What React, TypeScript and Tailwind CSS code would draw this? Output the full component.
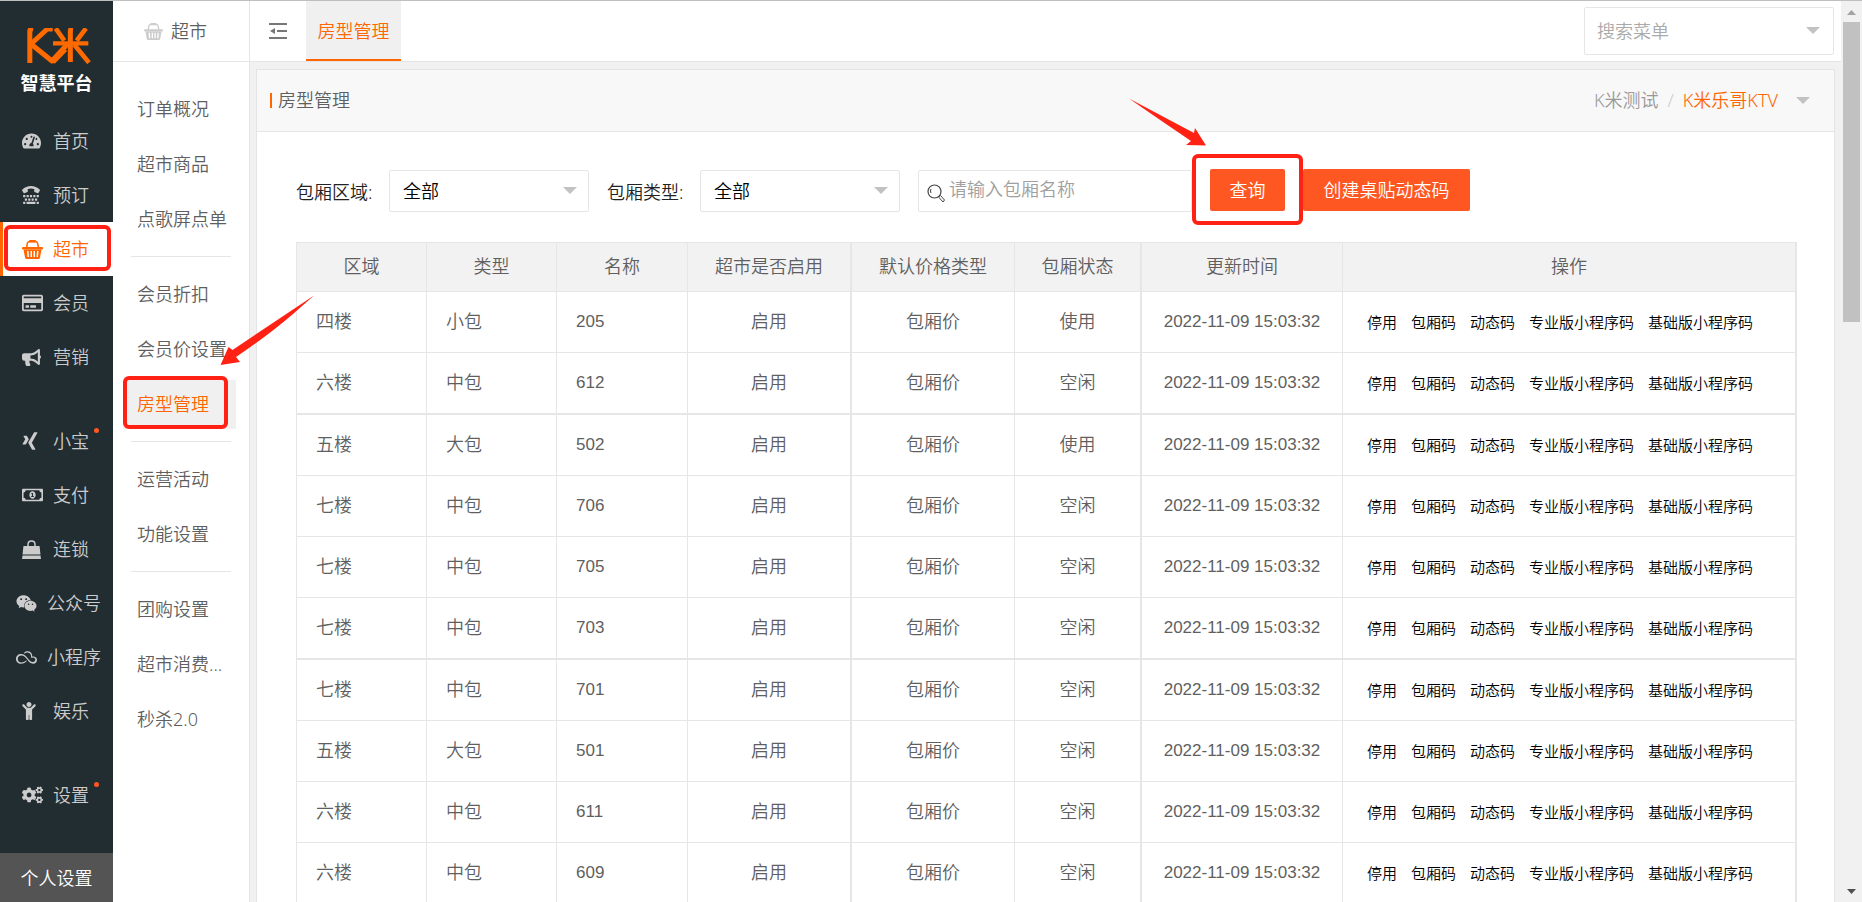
import type { ReactNode } from "react";
import {
  FaBullhorn,
  FaChild,
  FaCogs,
  FaRegCreditCard,
  FaRegMoneyBillAlt,
  FaSkyatlas,
  FaTachometerAlt,
  FaTty,
  FaWeixin,
  FaXing,
} from "react-icons/fa";

type NavItem = {
  label: string;
  icon: ReactNode;
  active?: boolean;
  dot?: boolean;
  wide?: boolean;
};

const navGroups: NavItem[][] = [
  [
    { label: "首页", icon: <FaTachometerAlt className="h-[18px] w-[19px]" /> },
    { label: "预订", icon: <FaTty className="size-[18px]" /> },
    { label: "超市", icon: <BasketIcon className="h-[19px] w-[21px]" />, active: true },
    { label: "会员", icon: <FaRegCreditCard className="h-5 w-[21px]" /> },
    { label: "营销", icon: <FaBullhorn className="size-[19px]" /> },
  ],
  [
    { label: "小宝", icon: <FaXing className="h-5 w-[16px]" />, dot: true },
    { label: "支付", icon: <FaRegMoneyBillAlt className="h-[18px] w-[21px]" /> },
    { label: "连锁", icon: <BagIcon /> },
    { label: "公众号", icon: <FaWeixin className="size-[21px]" />, wide: true },
    { label: "小程序", icon: <FaSkyatlas className="size-[21px]" />, wide: true },
    { label: "娱乐", icon: <FaChild className="h-[18px] w-[14px]" /> },
  ],
  [{ label: "设置", icon: <FaCogs className="h-5 w-[21px]" />, dot: true }],
];

const menuGroups = [
  ["订单概况", "超市商品", "点歌屏点单"],
  ["会员折扣", "会员价设置", "房型管理"],
  ["运营活动", "功能设置"],
  ["团购设置", "超市消费...", "秒杀2.0"],
];

const columns = [
  { title: "区域", width: "w-[130px]" },
  { title: "类型", width: "w-[130px]" },
  { title: "名称", width: "w-[131px]" },
  { title: "超市是否启用", width: "w-[164px]" },
  { title: "默认价格类型", width: "w-[163px]" },
  { title: "包厢状态", width: "w-[127px]" },
  { title: "更新时间", width: "w-[201px]" },
  { title: "操作", width: "" },
];

const rooms = [
  { area: "四楼", type: "小包", name: "205", status: "使用" },
  { area: "六楼", type: "中包", name: "612", status: "空闲" },
  { area: "五楼", type: "大包", name: "502", status: "使用" },
  { area: "七楼", type: "中包", name: "706", status: "空闲" },
  { area: "七楼", type: "中包", name: "705", status: "空闲" },
  { area: "七楼", type: "中包", name: "703", status: "空闲" },
  { area: "七楼", type: "中包", name: "701", status: "空闲" },
  { area: "五楼", type: "大包", name: "501", status: "空闲" },
  { area: "六楼", type: "中包", name: "611", status: "空闲" },
  { area: "六楼", type: "中包", name: "609", status: "空闲" },
];

const actions = ["停用", "包厢码", "动态码", "专业版小程序码", "基础版小程序码"];

function BasketIcon({ className }: { className: string }) {
  return (
    <svg viewBox="0 0 42 38" className={className} fill="currentColor">
      <path d="M9 15 11 6q1-3 4-3h12q3 0 4 3l2 9" fill="none" stroke="currentColor" strokeWidth="3" />
      <rect x="14" y="0" width="14" height="5" rx="2" />
      <rect x="0" y="14" width="42" height="5" rx="2" />
      <path
        fillRule="evenodd"
        d="M3 19h36l-3 16q-.5 3-3 3H9q-2.500 0-3-3zM10 22l1 12h3l-1-12zM17 22v12h3V22zM23 22v12h3V22zM30 22l-1 12h3l1-12z"
      />
    </svg>
  );
}

function BagIcon() {
  return (
    <svg viewBox="0 0 38 38" className="size-[19px]" fill="currentColor">
      <path d="M12 16V9q0-7 7-7t7 7v7" fill="none" stroke="currentColor" strokeWidth="3" />
      <path d="M3 12h32l2 17H1z" />
      <path d="M1 31h36l1 7H0z" />
    </svg>
  );
}

function Logo() {
  return (
    <svg viewBox="80 56 192 108" className="ml-[5px] h-9 w-16" fill="none" stroke="#ff6a00" strokeWidth="15">
      <path d="M88.500 161V66q0-8 10-8" />
      <path d="M157 59H141L92 104l63 51 45-49M195 120 158 158" strokeLinejoin="round" />
      <path d="M158 102H264" strokeWidth="13" />
      <path d="M210 158V66q0-8 8-8" />
      <path d="M166 57l26 37M257 57l-28 37M222 106l44 54" strokeWidth="14" />
    </svg>
  );
}

function Caret({ className = "" }: { className?: string }) {
  return (
    <svg viewBox="0 0 14 7" className={`h-[7px] w-[14px] fill-[#c2c2c2] ${className}`}>
      <path d="M0 0h14L7 7z" />
    </svg>
  );
}

function SearchIcon() {
  return (
    <svg viewBox="0 0 18 19" className="h-[19px] w-[18px]" fill="none" stroke="#444">
      <circle cx="7.500" cy="7.500" r="6.500" strokeWidth="1.200" />
      <path d="M4 9a4 4 0 0 1 0-4" strokeWidth="1" />
      <path d="M12 12.500l1.500-1 4 4.500-1.500 2-4-4.500z" strokeWidth="1" />
    </svg>
  );
}

function Frame({ className }: { className: string }) {
  return (
    <span className={`pointer-events-none absolute z-10 rounded-md border-4 border-[#ff2214] ${className}`} />
  );
}

function Arrows() {
  return (
    <svg className="pointer-events-none absolute -top-px left-0 z-20 h-[380px] w-[1220px] fill-[#ff2214]">
      <path d="M314 295.500 232.500 350 228.500 347 220.500 365 240 362 236 357Q270 334 293 314Z" />
      <path d="M1129 98.500 1194 133 1195 128 1206 145.500 1186 145 1191 141Q1160 120 1129 98.500Z" />
    </svg>
  );
}

function Sidebar() {
  return (
    <aside className="flex w-[113px] shrink-0 flex-col bg-[#222d32] text-[#ccc]">
      <div className="flex h-[113px] shrink-0 flex-col items-center pt-[27px]">
        <Logo />
        <span className="mt-[7px] text-[18px] leading-6 font-bold text-white">智慧平台</span>
      </div>
      <nav className="flex flex-col gap-[30px]">
        {navGroups.map((group) => (
          <div key={group[0].label}>
            {group.map((item) => (
              <a
                key={item.label}
                href="#"
                className={`relative flex h-[54px] items-center gap-[10px] ${item.wide ? "pl-4" : "pl-[22px]"} ${
                  item.active ? "bg-white text-[#ff6600]" : ""
                }`}
              >
                {item.active && <span className="absolute inset-y-0 left-0 w-[3px] bg-[#ff6600]" />}
                <span className="flex w-[21px] shrink-0">{item.icon}</span>
                <span className="whitespace-nowrap">{item.label}</span>
                {item.dot && <span className="absolute top-[14px] left-[94px] size-[5px] rounded-full bg-[#ff5722]" />}
                {item.active && <Frame className="inset-x-1 right-[2px] top-[3px] bottom-[5px]" />}
              </a>
            ))}
          </div>
        ))}
      </nav>
      <button className="mt-auto h-[49px] shrink-0 bg-[#545454] text-white">个人设置</button>
    </aside>
  );
}

function SubMenu() {
  return (
    <aside className="w-[137px] shrink-0 border-r border-[#e5e5e5] bg-white text-[#5f5f5f]">
      <div className="flex h-[61px] items-center gap-2 border-b border-[#e5e5e5] pl-[31px]">
        <BasketIcon className="h-[17px] w-[19px] text-[#ccc]" />
        超市
      </div>
      <nav className="pt-[23px]">
        {menuGroups.map((group, i) => (
          <div key={group[0]}>
            {i > 0 && <hr className="mx-[18px] mt-3 mb-[13px] border-[#e5e5e5]" />}
            <div className="flex flex-col gap-[6px] pr-[13px] pl-[10px]">
              {group.map((label) => {
                const active = label === "房型管理";
                return (
                  <a
                    key={label}
                    href="#"
                    className={`relative flex h-[49px] items-center pb-[2px] pl-[14px] whitespace-nowrap ${
                      active ? "bg-[#f0f0f0] text-[#ff6600]" : ""
                    }`}
                  >
                    {label}
                    {active && <Frame className="-top-1 right-2 bottom-0 left-0" />}
                  </a>
                );
              })}
            </div>
          </div>
        ))}
      </nav>
    </aside>
  );
}

function TopBar() {
  return (
    <header className="flex h-[61px] shrink-0 items-center border-b border-[#e5e5e5] bg-white pr-[7px]">
      <button aria-label="收起菜单" className="px-[19px]">
        <svg viewBox="0 0 18 16" className="h-4 w-[18px] fill-[#777]">
          <path d="M0 0h18v2H0zM8 7h10v2H8zM0 14h18v2H0zM1 8l5-3v6z" />
        </svg>
      </button>
      <a
        href="#"
        className="flex h-[60px] w-[95px] items-center justify-center self-end border-b-2 border-[#ff6600] bg-[#f0f0f0] pt-[2px] whitespace-nowrap text-[#ff6600]"
      >
        房型管理
      </a>
      <div className="relative ml-auto">
        <select
          aria-label="搜索菜单"
          className="h-12 w-[250px] appearance-none rounded-[2px] border border-[#e6e6e6] bg-white pl-3 text-[#aaa]"
        >
          <option>搜索菜单</option>
        </select>
        <Caret className="absolute top-5 right-[14px]" />
      </div>
    </header>
  );
}

function Filter({ id, label }: { id: string; label: string }) {
  return (
    <div className="flex items-center">
      <label htmlFor={id} className="w-[93px] pt-[2px] whitespace-nowrap text-[#222]">
        {label}
      </label>
      <div className="relative">
        <select
          id={id}
          className="block h-[42px] w-[200px] appearance-none rounded-[2px] border border-[#e6e6e6] bg-white pl-[13px] text-black"
        >
          <option>全部</option>
        </select>
        <Caret className="absolute top-[17px] right-3" />
      </div>
    </div>
  );
}

function Filters() {
  return (
    <form className="flex items-center gap-[18px]">
      <Filter id="area" label="包厢区域:" />
      <Filter id="type" label="包厢类型:" />
      <div className="relative">
        <span className="absolute top-[14px] left-[9px]">
          <SearchIcon />
        </span>
        <input
          aria-label="包厢名称"
          placeholder="请输入包厢名称"
          className="block h-[42px] w-[274px] rounded-[2px] border border-[#e6e6e6] pb-1 pl-[30px] placeholder:text-[#a0a0a0]"
        />
      </div>
      <div className="relative mb-[2px]">
        <button type="button" className="block h-[42px] w-[75px] rounded-[2px] bg-[#ff5722] text-white">
          查询
        </button>
        <Frame className="-inset-x-[18px] -top-[15px] -bottom-[14px]" />
      </div>
      <button type="button" className="mb-[2px] h-[42px] w-[167px] rounded-[2px] bg-[#ff5722] text-white">
        创建桌贴动态码
      </button>
    </form>
  );
}

function RoomTable() {
  return (
    <table className="mt-[29px] w-full table-fixed border-separate border-spacing-0 border-t border-r-2 border-l border-[#e6e6e6] text-[#5f5f5f]">
      <thead>
        <tr className="h-[49px] bg-[#f2f2f2]">
          {columns.map((col, i) => (
            <th
              key={col.title}
              className={`${col.width} border-b border-[#e6e6e6] p-0 pb-[2px] font-[350] ${
                i === 3 || i === 5 ? "border-r-2" : i < 7 ? "border-r" : ""
              }`}
            >
              {col.title}
            </th>
          ))}
        </tr>
      </thead>
      <tbody>
        {rooms.map((room, i) => {
          const thick = i === 1 || i === 5;
          const line = `border-[#e6e6e6] p-0 ${thick ? "border-b-2" : "border-b"}`;
          const cell = `${line} pb-[2px]`;
          const digits = `${line} border-r font-['Liberation_Sans'] text-[17px] whitespace-nowrap`;
          return (
            <tr key={room.name} className={thick ? "h-[62px]" : "h-[61px]"}>
              <td className={`${cell} border-r pl-[19px]`}>{room.area}</td>
              <td className={`${cell} border-r pl-[19px]`}>{room.type}</td>
              <td className={`${digits} pl-[19px]`}>{room.name}</td>
              <td className={`${cell} border-r-2 text-center`}>启用</td>
              <td className={`${cell} border-r text-center`}>包厢价</td>
              <td className={`${cell} border-r-2 text-center`}>{room.status}</td>
              <td className={`${digits} text-center`}>2022-11-09 15:03:32</td>
              <td className={line}>
                <div className="flex gap-[14px] pl-6 text-[15px] leading-6 whitespace-nowrap text-black">
                  {actions.map((action) => (
                    <a key={action} href="#">
                      {action}
                    </a>
                  ))}
                </div>
              </td>
            </tr>
          );
        })}
      </tbody>
    </table>
  );
}

function Scrollbar() {
  return (
    <div className="flex w-[21px] shrink-0 flex-col items-center bg-[#f1f1f1]">
      <svg viewBox="0 0 9 5" className="mt-[9px] h-[5px] w-[9px] fill-[#a3a3a3]">
        <path d="M0 5h9L4.500 0z" />
      </svg>
      <div className="mt-[7px] h-1/3 w-[17px] bg-[#c1c1c1]" />
      <svg viewBox="0 0 9 5" className="mt-auto mb-2 h-[5px] w-[9px] fill-[#505050]">
        <path d="M0 0h9L4.500 5z" />
      </svg>
    </div>
  );
}

export default function App() {
  return (
    <div className="relative flex h-screen overflow-hidden border-t border-[#bfbfbf] bg-white font-['Noto_Sans','Noto_Sans_CJK_SC',sans-serif] text-[18px] leading-7 font-[350]">
      <Sidebar />
      <SubMenu />
      <div className="flex min-w-0 flex-1 flex-col bg-[#f1f1f1]">
        <TopBar />
        <main className="mt-[7px] mr-[6px] ml-[6px] flex-1 border border-[#e5e5e5] bg-white">
          <div className="flex h-[62px] items-center border-b border-[#e5e5e5] bg-[#f8f8f8] pr-6 pl-[13px]">
            <span className="mr-[6px] h-[15px] w-[2px] bg-[#ff6600]" />
            <h1 className="pb-[2px] font-[350] text-[#5f5f5f]">房型管理</h1>
            <div className="ml-auto flex items-center">
              <div className="flex pb-[2px]">
                <span className="text-[#999]">K米测试</span>
                <span className="mx-[9px] text-[#ccc]">/</span>
                <a href="#" className="text-[#ff6600]">
                  K米乐哥KTV
                </a>
              </div>
              <Caret className="ml-[18px]" />
            </div>
          </div>
          <div className="pt-[37px] pr-[37px] pl-[39px]">
            <Filters />
            <RoomTable />
          </div>
        </main>
      </div>
      <Scrollbar />
      <Arrows />
    </div>
  );
}
